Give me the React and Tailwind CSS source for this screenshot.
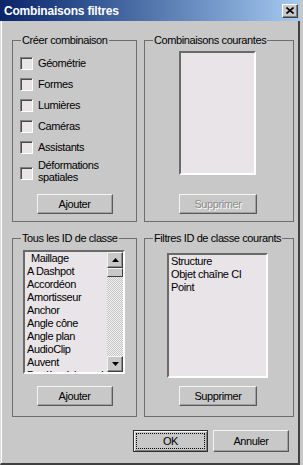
import React from "react";

const allIds = [
  "A Dashpot",
  "Accordéon",
  "Amortisseur",
  "Anchor",
  "Angle cône",
  "Angle plan",
  "AudioClip",
  "Auvent",
  "Barrière à bascule",
];

const currentIds = ["Structure", "Objet chaîne CI", "Point"];

const checks = ["Géométrie", "Formes", "Lumières", "Caméras", "Assistants"];

/* Classic 3D widgets */
const Button = ({ children, disabled, className = "" }) => (
  <button
    type="button"
    className={`flex items-center justify-center bg-[#c8c8c8] border border-t-[#f4f4f4] border-l-[#f4f4f4] border-r-[#5a5a5a] border-b-[#5a5a5a] shadow-[inset_-1px_-1px_0_#a0a0a0] text-[11px] leading-[13px] tracking-[-0.4px] ${
      disabled ? "text-[#8c8c8c] [text-shadow:1px_1px_0_#ffffff]" : "text-black"
    } ${className}`}
  >
    {children}
  </button>
);

const Checkbox = ({ className = "" }) => (
  <span
    className={`w-[13px] h-[13px] shrink-0 bg-[#e8e4e8] border border-t-[#808080] border-l-[#808080] border-r-white border-b-white shadow-[inset_1px_1px_0_#4a4a4a] ${className}`}
  />
);

const Group = ({ title, className = "", children }) => (
  <div className={`flex flex-col border border-[#6e6e6e] ${className}`}>
    <span className="-mt-[7px] ml-[8px] self-start px-[1px] bg-[#c8c8c8] text-[11px] leading-[13px] tracking-[-0.4px] text-black whitespace-nowrap">
      {title}
    </span>
    {children}
  </div>
);

const Listbox = ({ className = "", children }) => (
  <div
    className={`flex bg-[#e8e4e8] border-2 border-t-[#6a6a6a] border-l-[#6a6a6a] border-r-white border-b-white overflow-hidden ${className}`}
  >
    {children}
  </div>
);

const ScrollButton = ({ up }) => (
  <div className="w-[16px] h-[16px] shrink-0 flex items-center justify-center bg-[#c8c8c8] border border-t-[#f4f4f4] border-l-[#f4f4f4] border-r-[#404040] border-b-[#404040] shadow-[inset_-1px_-1px_0_#8a8a8a]">
    <svg width="7" height="4" viewBox="0 0 7 4">
      {up ? <path d="M3.5 0 L7 4 L0 4 Z" fill="#000" /> : <path d="M0 0 L7 0 L3.5 4 Z" fill="#000" />}
    </svg>
  </div>
);

const App = () => {
  return (
    <div className="w-[303px] h-[465px] bg-[#c8c8c8] font-['Liberation_Sans',Arial,sans-serif] text-black overflow-hidden">
      <div className="w-[300px] h-[465px] flex flex-col">
        {/* Title bar */}
        <div className="h-[21px] shrink-0 flex items-center justify-between pl-[4px] pr-[2px] bg-linear-to-r from-[#0a246a] to-[#a6caf0]">
          <span className="text-white font-bold text-[12px] leading-[14px] tracking-[-0.2px]">
            Combinaisons filtres
          </span>
          <button
            type="button"
            aria-label="Fermer"
            className="w-[16px] h-[14px] flex items-center justify-center bg-[#c8c8c8] border border-t-white border-l-white border-r-[#404040] border-b-[#404040] shadow-[inset_-1px_-1px_0_#808080]"
          >
            <svg width="8" height="7" viewBox="0 0 8 7">
              <path d="M0.5 0.5 L7.5 6.5 M7.5 0.5 L0.5 6.5" stroke="#000" strokeWidth="1.6" />
            </svg>
          </button>
        </div>

        {/* Body */}
        <div className="flex-1 flex flex-col pl-[11px] pt-[19px] border-l border-l-[#dcdcdc] shadow-[inset_1px_0_0_#ffffff] border-r-2 border-r-[#404040] border-b-2 border-b-[#404040]">
          <div className="flex gap-[7px] h-[182px]">
            <Group title="Créer combinaison" className="w-[125px]">
              <div className="flex flex-col gap-[8px] mt-[10px] pl-[7px]">
                {checks.map((c) => (
                  <label key={c} className="h-[13px] flex items-center gap-[5px] text-[11px] leading-[13px] tracking-[-0.4px]">
                    <Checkbox />
                    <span>{c}</span>
                  </label>
                ))}
                <label className="-mt-[3px] flex items-center gap-[5px] text-[11px] leading-[12px] tracking-[-0.4px]">
                  <Checkbox className="mt-[4px]" />
                  <span>
                    Déformations
                    <br />
                    spatiales
                  </span>
                </label>
              </div>
              <Button className="mt-auto mb-[7px] self-center w-[76px] h-[20px]">Ajouter</Button>
            </Group>

            <Group title="Combinaisons courantes" className="w-[150px]">
              <Listbox className="mt-[4px] ml-[34px] w-[77px] h-[124px]" />
              <Button disabled className="mt-auto mb-[7px] ml-[34px] w-[78px] h-[20px]">
                Supprimer
              </Button>
            </Group>
          </div>

          <div className="flex gap-[7px] h-[179px] mt-[16px]">
            <Group title="Tous les ID de classe" className="w-[125px]">
              <Listbox className="mt-[5px] ml-[10px] w-[102px] h-[124px]">
                <div className="flex-1 pl-[2px] text-[11px] leading-[13px] tracking-[-0.4px] whitespace-nowrap overflow-hidden">
                  <div className="pl-[4px]">Maillage</div>
                  {allIds.map((id) => (
                    <div key={id}>{id}</div>
                  ))}
                </div>
                <div className="w-[16px] shrink-0 flex flex-col bg-[repeating-conic-gradient(#c4c4c4_0%_25%,#f2f2f2_0%_50%)] bg-[length:2px_2px]">
                  <ScrollButton up />
                  <div className="w-[16px] h-[9px] shrink-0 bg-[#c8c8c8] border border-t-[#f4f4f4] border-l-[#f4f4f4] border-r-[#404040] border-b-[#404040]" />
                  <div className="flex-1" />
                  <ScrollButton />
                </div>
              </Listbox>
              <Button className="mt-auto mb-[10px] self-center w-[76px] h-[20px]">Ajouter</Button>
            </Group>

            <Group title="Filtres ID de classe courants" className="w-[150px]">
              <Listbox className="mt-[8px] ml-[22px] w-[101px] h-[125px]">
                <div className="flex-1 pl-[2px] text-[11px] leading-[13px] tracking-[-0.4px] whitespace-nowrap">
                  {currentIds.map((id) => (
                    <div key={id}>{id}</div>
                  ))}
                </div>
              </Listbox>
              <Button className="mt-auto mb-[10px] ml-[34px] w-[78px] h-[20px]">Supprimer</Button>
            </Group>
          </div>

          <div className="w-[282px] flex justify-end gap-[5px] mt-[13px] pr-[5px]">
            <button
              type="button"
              className="w-[75px] h-[22px] flex items-center justify-center bg-[#c8c8c8] border border-[#303030] shadow-[inset_1px_1px_0_#f4f4f4,inset_-1px_-1px_0_#808080] outline-1 outline-dotted outline-black -outline-offset-4 text-[11px] leading-[13px] tracking-[-0.4px]"
            >
              OK
            </button>
            <Button className="w-[76px] h-[22px]">Annuler</Button>
          </div>
        </div>
      </div>
    </div>
  );
};

export default App;
